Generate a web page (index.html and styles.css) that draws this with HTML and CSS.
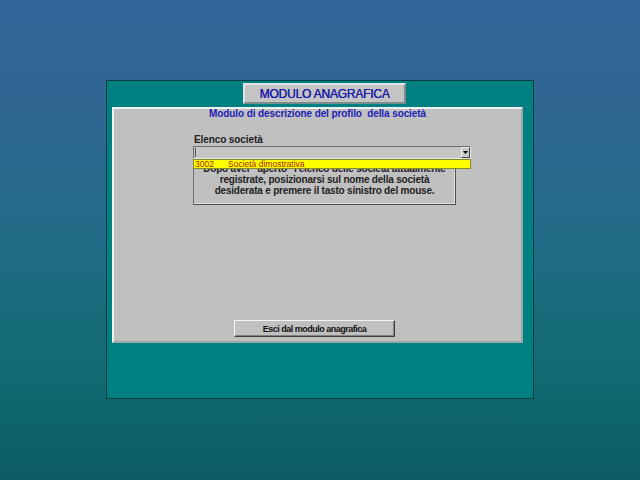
FILE: index.html
```html
<!DOCTYPE html>
<html lang="it">
<head>
<meta charset="utf-8">
<title>Modulo anagrafica</title>
<link rel="stylesheet" href="styles.css">
</head>
<body>
<div class="window">
  <div class="title-btn"><span>MODULO ANAGRAFICA</span></div>
  <div class="panel">
    <div class="subtitle">Modulo di descrizione del profilo&nbsp; della società</div>
    <div class="form">
      <div class="label">Elenco società</div>
      <div class="combo">
        <span class="caret"></span>
        <span class="arrow"><svg width="5" height="3" viewBox="0 0 5 3"><path d="M0 0H5L2.5 3Z" fill="#000"/></svg></span>
        <div class="list"><span class="code">3002</span><span class="name">Società dimostrativa</span></div>
      </div>
      <div class="info">
        <p>Dopo aver "aperto" l'elenco delle società attualmente</p>
        <p>registrate, posizionarsi sul nome della società</p>
        <p>desiderata e premere il tasto sinistro del mouse.</p>
      </div>
    </div>
    <div class="exit-btn"><span>Esci dal modulo anagrafica</span></div>
  </div>
</div>
</body>
</html>
```

FILE: styles.css
```css
html, body {
  margin: 0;
  padding: 0;
}
body {
  width: 640px;
  height: 480px;
  background: linear-gradient(#336699 0%, #306693 20%, #216b86 50%, #126c74 75%, #0b5c62 100%);
  display: flex;
  justify-content: center;
  align-items: flex-start;
  padding-top: 80px;
  box-sizing: border-box;
  font-family: "Liberation Sans", Arial, sans-serif;
}
.window {
  width: 428px;
  height: 319px;
  box-sizing: border-box;
  background: #008080;
  border: 1px solid #0a3c44;
  display: flex;
  flex-direction: column;
}
.title-btn {
  margin: 2px 0 0 136px;
  width: 163px;
  height: 21px;
  box-sizing: border-box;
  background: #c4c4c4;
  border: 2px solid;
  border-color: #e4e4e4 #7c8c8c #7c8c8c #e4e4e4;
  display: flex;
  align-items: center;
  justify-content: center;
}
.title-btn span {
  color: #1c1ca8;
  font-size: 12px;
  font-weight: normal;
  letter-spacing: -0.2px;
  text-shadow: 0.4px 0 0 #1c1ca8;
  padding-top: 1px;
}
.panel {
  margin: 3px 0 0 5px;
  width: 411px;
  height: 236px;
  box-sizing: border-box;
  background: #c0c0c0;
  border: 2px solid;
  border-color: #eef2f2 #9aa8a8 #9aa8a8 #eef2f2;
  display: flex;
  flex-direction: column;
}
.subtitle {
  text-align: center;
  color: #2222b4;
  font-size: 10px;
  font-weight: bold;
  letter-spacing: -0.1px;
  line-height: 12px;
  margin-top: -1px;
  white-space: pre;
}
.form {
  margin: 14px 0 0 79px;
  width: 278px;
}
.label {
  color: #222;
  font-size: 10px;
  font-weight: bold;
  letter-spacing: -0.1px;
  line-height: 12px;
  padding-left: 1px;
}
.combo {
  position: relative;
  height: 13px;
  box-sizing: border-box;
  background: #c6c6c6;
  border: 1px solid;
  border-color: #6a6a6a #e8e8e8 #e8e8e8 #6a6a6a;
  display: flex;
  align-items: center;
  justify-content: space-between;
}
.caret {
  width: 1px;
  height: 9px;
  margin-left: 1px;
  background: #555;
}
.arrow {
  width: 9px;
  height: 11px;
  box-sizing: border-box;
  background: #c8c8c8;
  border: 1px solid;
  border-color: #f0f0f0 #404040 #404040 #f0f0f0;
  display: flex;
  align-items: center;
  justify-content: center;
}
.list {
  position: absolute;
  left: -1px;
  right: -1px;
  top: 12px;
  height: 10px;
  box-sizing: border-box;
  background: #ffff00;
  border: 1px solid #8a8a20;
  display: flex;
  align-items: center;
  font-size: 8.5px;
  line-height: 8px;
  color: #a81c00;
  z-index: 2;
}
.code {
  width: 33px;
  padding-left: 1px;
}
.info {
  margin: 1px 0 0 0;
  width: 263px;
  height: 45px;
  box-sizing: border-box;
  border: 1px solid;
  border-color: #707070 #505050 #505050 #707070;
  box-shadow: inset -1px -1px 0 #e0e0e0;
  padding-top: 2px;
  text-align: center;
  color: #222;
  font-size: 10px;
  font-weight: bold;
  letter-spacing: -0.2px;
  line-height: 11px;
  overflow: hidden;
}
.info p {
  margin: 0;
  white-space: nowrap;
}
.exit-btn {
  margin: auto 0 4px 120px;
  width: 161px;
  height: 17px;
  box-sizing: border-box;
  background: #c0c0c0;
  border: 1px solid;
  border-color: #f4f4f4 #404040 #404040 #f4f4f4;
  box-shadow: inset -1px -1px 0 #808080;
  display: flex;
  align-items: center;
  justify-content: center;
  color: #111;
  font-size: 9px;
  font-weight: bold;
  letter-spacing: -0.5px;
}
```
